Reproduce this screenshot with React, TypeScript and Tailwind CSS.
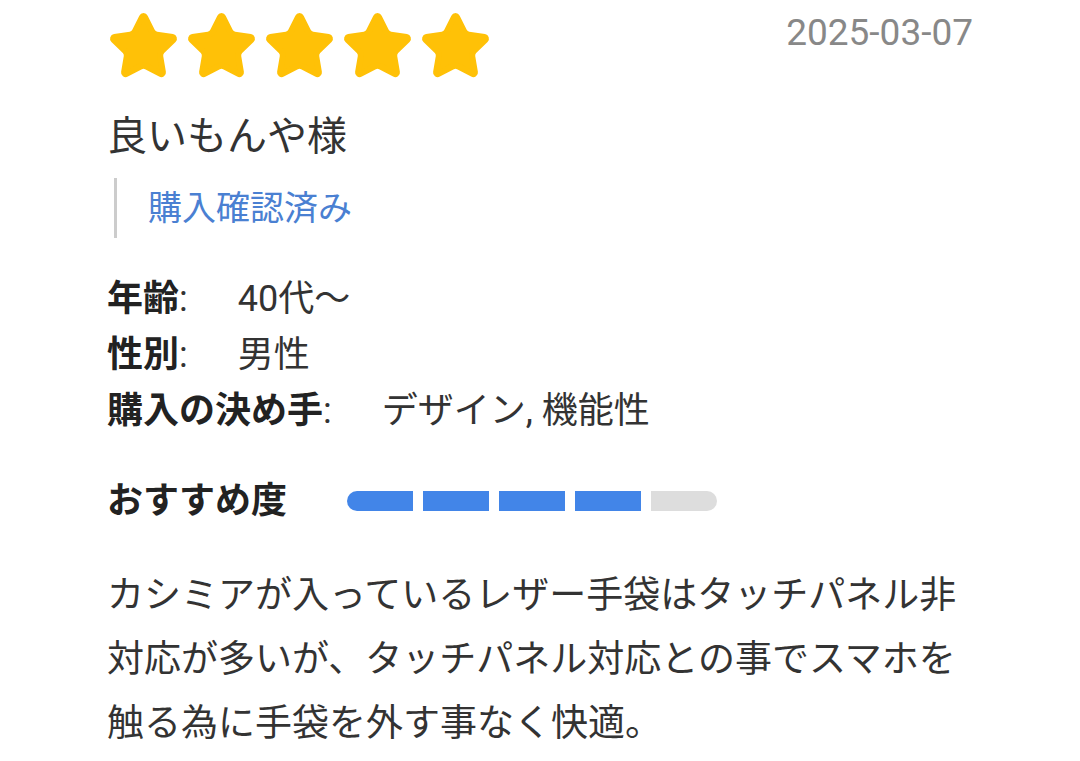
import React from "react";

const Star = () => (
  <svg width="73" height="73" viewBox="0 0 24 24" className="block">
    <path
      d="M11.525 2.295a.53.53 0 0 1 .95 0l2.31 4.679a2.123 2.123 0 0 0 1.595 1.16l5.166.756a.53.53 0 0 1 .294.904l-3.736 3.638a2.123 2.123 0 0 0-.611 1.878l.882 5.14a.53.53 0 0 1-.771.56l-4.618-2.428a2.122 2.122 0 0 0-1.973 0L6.396 21.01a.53.53 0 0 1-.77-.56l.881-5.139a2.122 2.122 0 0 0-.611-1.879L2.16 9.795a.53.53 0 0 1 .294-.906l5.165-.755a2.122 2.122 0 0 0 1.597-1.16z"
      fill="#FFC107"
      stroke="#FFC107"
      strokeWidth="2"
      strokeLinejoin="round"
    />
  </svg>
);

export default function App() {
  const bars = [true, true, true, true, false];
  return (
    <div
      className="w-[1080px] h-[761px] bg-white overflow-hidden text-[#333333]"
      style={{ fontFamily: 'Roboto, "Noto Sans CJK JP", sans-serif' }}
    >
      <div className="pl-[107px] pr-[107px] pt-[10px]">
        <div className="flex justify-between items-start">
          <div className="flex gap-[5px]">
            <Star />
            <Star />
            <Star />
            <Star />
            <Star />
          </div>
          <div className="text-[37px] leading-[44px] text-[#888888] mt-[1px]">2025-03-07</div>
        </div>

        <div className="mt-[30px] text-[40px] leading-[48px] text-[#333333]">良いもんや様</div>

        <div className="mt-[17px] ml-[7px] border-l-[3px] border-[#cccccc] pl-[31px] py-[8px] text-[34px] leading-[44px] text-[#4a80d2]">
          購入確認済み
        </div>

        <div className="mt-[33px] flex flex-col text-[36px] leading-[56px]">
          <div className="flex">
            <span className="font-bold text-[#222222]">年齢</span>
            <span className="text-[#333333]">:</span>
            <span className="ml-[50px]">40代〜</span>
          </div>
          <div className="flex">
            <span className="font-bold text-[#222222]">性別</span>
            <span className="text-[#333333]">:</span>
            <span className="ml-[50px]">男性</span>
          </div>
          <div className="flex">
            <span className="font-bold text-[#222222]">購入の決め手</span>
            <span className="text-[#333333]">:</span>
            <span className="ml-[50px]">デザイン, 機能性</span>
          </div>
        </div>

        <div className="mt-[38px] flex items-center">
          <span className="font-bold text-[36px] leading-[48px] text-[#222222] w-[240px]">おすすめ度</span>
          <div className="flex gap-[10px]">
            {bars.map((on, i) => (
              <div
                key={i}
                className={
                  "h-[20px] w-[66px] " +
                  (on ? "bg-[#4285e8] " : "bg-[#dddddd] ") +
                  (i === 0 ? "rounded-l-full " : "") +
                  (i === 4 ? "rounded-r-full" : "")
                }
              />
            ))}
          </div>
        </div>

        <div className="mt-[39px] text-[37px] leading-[64px] text-[#333333]">
          カシミアが入っているレザー手袋はタッチパネル非対応が多いが、タッチパネル対応との事でスマホを触る為に手袋を外す事なく快適。
        </div>
      </div>
    </div>
  );
}
